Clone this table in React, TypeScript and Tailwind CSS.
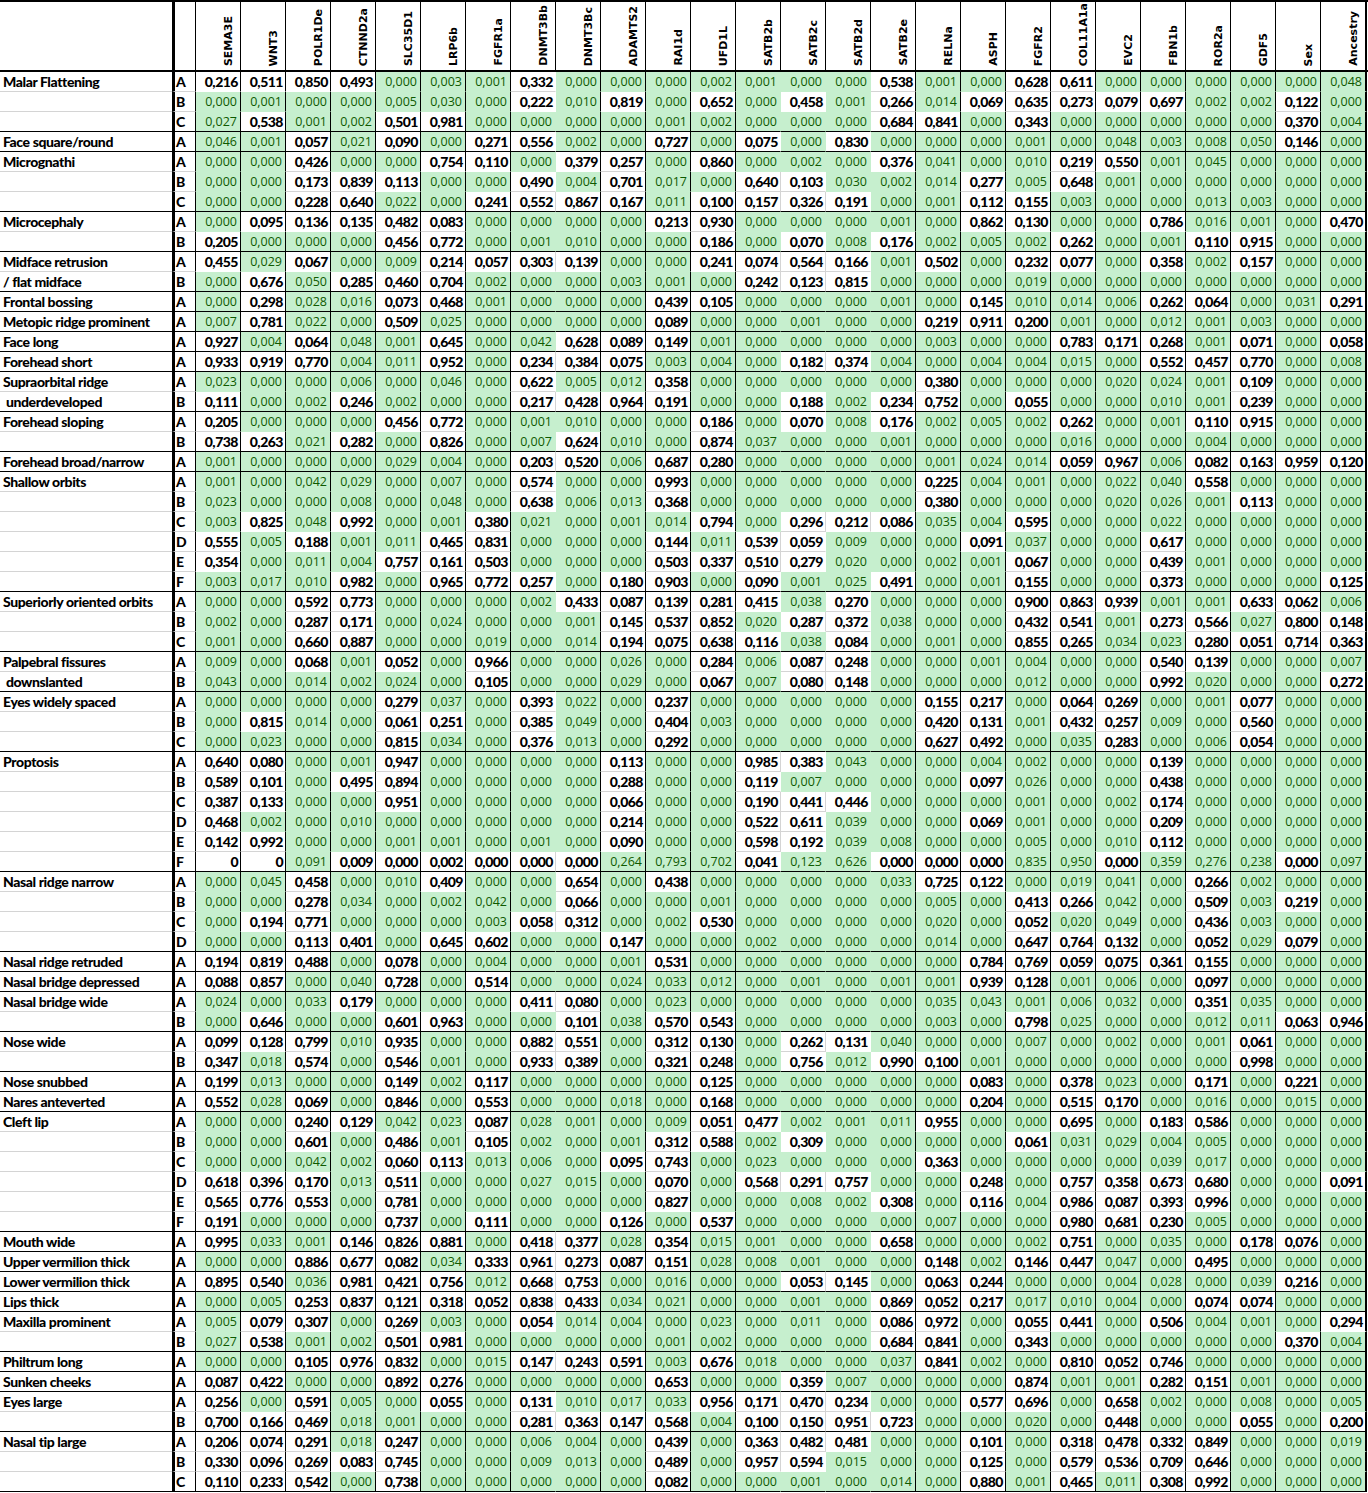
import React from "react";

const GENES = [
  "SEMA3E", "WNT3", "POLR1De", "CTNND2a", "SLC35D1", "LRP6b", "FGFR1a",
  "DNMT3Bb", "DNMT3Bc", "ADAMTS2", "RAI1d", "UFD1L", "SATB2b", "SATB2c",
  "SATB2d", "SATB2e", "RELNa", "ASPH", "FGFR2", "COL11A1a", "EVC2", "FBN1b",
  "ROR2a", "GDF5", "Sex", "Ancestry",
];

// columns of one gene with several SNPs: no black rule on their right edge
const OPEN = new Set([7, 12, 13, 14]);

// this row was colour-coded the other way round in the sheet
const INVERTED = new Set([39]);

const GROUPS: [string[], string[]][] = [
  [["Malar Flattening"], [
    "0,216 0,511 0,850 0,493 0,000 0,003 0,001 0,332 0,000 0,000 0,000 0,002 0,001 0,000 0,000 0,538 0,001 0,000 0,628 0,611 0,000 0,000 0,000 0,000 0,000 0,048",
    "0,000 0,001 0,000 0,000 0,005 0,030 0,000 0,222 0,010 0,819 0,000 0,652 0,000 0,458 0,001 0,266 0,014 0,069 0,635 0,273 0,079 0,697 0,002 0,002 0,122 0,000",
    "0,027 0,538 0,001 0,002 0,501 0,981 0,000 0,000 0,000 0,000 0,001 0,002 0,000 0,000 0,000 0,684 0,841 0,000 0,343 0,000 0,000 0,000 0,000 0,000 0,370 0,004",
  ]],
  [["Face square/round"], [
    "0,046 0,001 0,057 0,021 0,090 0,000 0,271 0,556 0,002 0,000 0,727 0,000 0,075 0,000 0,830 0,000 0,000 0,000 0,001 0,000 0,048 0,003 0,008 0,050 0,146 0,000",
  ]],
  [["Micrognathi"], [
    "0,000 0,000 0,426 0,000 0,000 0,754 0,110 0,000 0,379 0,257 0,000 0,860 0,000 0,002 0,000 0,376 0,041 0,000 0,010 0,219 0,550 0,001 0,045 0,000 0,000 0,000",
    "0,000 0,000 0,173 0,839 0,113 0,000 0,000 0,490 0,004 0,701 0,017 0,000 0,640 0,103 0,030 0,002 0,014 0,277 0,005 0,648 0,001 0,000 0,000 0,000 0,000 0,000",
    "0,000 0,000 0,228 0,640 0,022 0,000 0,241 0,552 0,867 0,167 0,011 0,100 0,157 0,326 0,191 0,000 0,001 0,112 0,155 0,003 0,000 0,000 0,013 0,003 0,000 0,000",
  ]],
  [["Microcephaly"], [
    "0,000 0,095 0,136 0,135 0,482 0,083 0,000 0,000 0,000 0,000 0,213 0,930 0,000 0,000 0,000 0,001 0,000 0,862 0,130 0,000 0,000 0,786 0,016 0,001 0,000 0,470",
    "0,205 0,000 0,000 0,000 0,456 0,772 0,000 0,001 0,010 0,000 0,000 0,186 0,000 0,070 0,008 0,176 0,002 0,005 0,002 0,262 0,000 0,001 0,110 0,915 0,000 0,000",
  ]],
  [["Midface retrusion", "/ flat midface"], [
    "0,455 0,029 0,067 0,000 0,009 0,214 0,057 0,303 0,139 0,000 0,000 0,241 0,074 0,564 0,166 0,001 0,502 0,000 0,232 0,077 0,000 0,358 0,002 0,157 0,000 0,000",
    "0,000 0,676 0,050 0,285 0,460 0,704 0,002 0,000 0,000 0,003 0,001 0,000 0,242 0,123 0,815 0,000 0,000 0,000 0,019 0,000 0,000 0,000 0,000 0,000 0,000 0,000",
  ]],
  [["Frontal bossing"], [
    "0,000 0,298 0,028 0,016 0,073 0,468 0,001 0,000 0,000 0,000 0,439 0,105 0,000 0,000 0,000 0,001 0,000 0,145 0,010 0,014 0,006 0,262 0,064 0,000 0,031 0,291",
  ]],
  [["Metopic ridge prominent"], [
    "0,007 0,781 0,022 0,000 0,509 0,025 0,000 0,000 0,000 0,000 0,089 0,000 0,000 0,001 0,000 0,000 0,219 0,911 0,200 0,001 0,000 0,012 0,001 0,003 0,000 0,000",
  ]],
  [["Face long"], [
    "0,927 0,004 0,064 0,048 0,001 0,645 0,000 0,042 0,628 0,089 0,149 0,001 0,000 0,000 0,000 0,000 0,003 0,000 0,000 0,783 0,171 0,268 0,001 0,071 0,000 0,058",
  ]],
  [["Forehead short"], [
    "0,933 0,919 0,770 0,004 0,011 0,952 0,000 0,234 0,384 0,075 0,003 0,004 0,000 0,182 0,374 0,004 0,000 0,004 0,004 0,015 0,000 0,552 0,457 0,770 0,000 0,008",
  ]],
  [["Supraorbital ridge", " underdeveloped"], [
    "0,023 0,000 0,000 0,006 0,000 0,046 0,000 0,622 0,005 0,012 0,358 0,000 0,000 0,000 0,000 0,000 0,380 0,000 0,000 0,000 0,020 0,024 0,001 0,109 0,000 0,000",
    "0,111 0,000 0,002 0,246 0,002 0,000 0,000 0,217 0,428 0,964 0,191 0,000 0,000 0,188 0,002 0,234 0,752 0,000 0,055 0,000 0,000 0,010 0,001 0,239 0,000 0,000",
  ]],
  [["Forehead sloping"], [
    "0,205 0,000 0,000 0,000 0,456 0,772 0,000 0,001 0,010 0,000 0,000 0,186 0,000 0,070 0,008 0,176 0,002 0,005 0,002 0,262 0,000 0,001 0,110 0,915 0,000 0,000",
    "0,738 0,263 0,021 0,282 0,000 0,826 0,000 0,007 0,624 0,010 0,000 0,874 0,037 0,000 0,000 0,001 0,000 0,000 0,000 0,016 0,000 0,000 0,004 0,000 0,000 0,000",
  ]],
  [["Forehead broad/narrow"], [
    "0,001 0,000 0,000 0,000 0,029 0,004 0,000 0,203 0,520 0,006 0,687 0,280 0,000 0,000 0,000 0,000 0,001 0,024 0,014 0,059 0,967 0,006 0,082 0,163 0,959 0,120",
  ]],
  [["Shallow orbits"], [
    "0,001 0,000 0,042 0,029 0,000 0,007 0,000 0,574 0,000 0,000 0,993 0,000 0,000 0,000 0,000 0,000 0,225 0,004 0,001 0,000 0,022 0,040 0,558 0,000 0,000 0,000",
    "0,023 0,000 0,000 0,008 0,000 0,048 0,000 0,638 0,006 0,013 0,368 0,000 0,000 0,000 0,000 0,000 0,380 0,000 0,000 0,000 0,020 0,026 0,001 0,113 0,000 0,000",
    "0,003 0,825 0,048 0,992 0,000 0,001 0,380 0,021 0,000 0,001 0,014 0,794 0,000 0,296 0,212 0,086 0,035 0,004 0,595 0,000 0,000 0,022 0,000 0,000 0,000 0,000",
    "0,555 0,005 0,188 0,001 0,011 0,465 0,831 0,000 0,000 0,000 0,144 0,011 0,539 0,059 0,009 0,000 0,000 0,091 0,037 0,000 0,000 0,617 0,000 0,000 0,000 0,000",
    "0,354 0,000 0,011 0,004 0,757 0,161 0,503 0,000 0,000 0,000 0,503 0,337 0,510 0,279 0,020 0,000 0,002 0,001 0,067 0,000 0,000 0,439 0,001 0,000 0,000 0,000",
    "0,003 0,017 0,010 0,982 0,000 0,965 0,772 0,257 0,000 0,180 0,903 0,000 0,090 0,001 0,025 0,491 0,000 0,001 0,155 0,000 0,000 0,373 0,000 0,000 0,000 0,125",
  ]],
  [["Superiorly oriented orbits"], [
    "0,000 0,000 0,592 0,773 0,000 0,000 0,000 0,002 0,433 0,087 0,139 0,281 0,415 0,038 0,270 0,000 0,000 0,000 0,900 0,863 0,939 0,001 0,001 0,633 0,062 0,006",
    "0,002 0,000 0,287 0,171 0,000 0,024 0,000 0,000 0,001 0,145 0,537 0,852 0,020 0,287 0,372 0,038 0,000 0,000 0,432 0,541 0,001 0,273 0,566 0,027 0,800 0,148",
    "0,001 0,000 0,660 0,887 0,000 0,000 0,019 0,000 0,014 0,194 0,075 0,638 0,116 0,038 0,084 0,000 0,001 0,000 0,855 0,265 0,034 0,023 0,280 0,051 0,714 0,363",
  ]],
  [["Palpebral fissures", " downslanted"], [
    "0,009 0,000 0,068 0,001 0,052 0,000 0,966 0,000 0,000 0,026 0,000 0,284 0,006 0,087 0,248 0,000 0,000 0,001 0,004 0,000 0,000 0,540 0,139 0,000 0,000 0,007",
    "0,043 0,000 0,014 0,002 0,024 0,000 0,105 0,000 0,000 0,029 0,000 0,067 0,007 0,080 0,148 0,000 0,000 0,000 0,012 0,000 0,000 0,992 0,020 0,000 0,000 0,272",
  ]],
  [["Eyes widely spaced"], [
    "0,000 0,000 0,000 0,000 0,279 0,037 0,000 0,393 0,022 0,000 0,237 0,000 0,000 0,000 0,000 0,000 0,155 0,217 0,000 0,064 0,269 0,000 0,001 0,077 0,000 0,000",
    "0,000 0,815 0,014 0,000 0,061 0,251 0,000 0,385 0,049 0,000 0,404 0,003 0,000 0,000 0,000 0,000 0,420 0,131 0,001 0,432 0,257 0,009 0,000 0,560 0,000 0,000",
    "0,000 0,023 0,000 0,000 0,815 0,034 0,000 0,376 0,013 0,000 0,292 0,000 0,000 0,000 0,000 0,000 0,627 0,492 0,000 0,035 0,283 0,000 0,006 0,054 0,000 0,000",
  ]],
  [["Proptosis"], [
    "0,640 0,080 0,000 0,001 0,947 0,000 0,000 0,000 0,000 0,113 0,000 0,000 0,985 0,383 0,043 0,000 0,000 0,004 0,002 0,000 0,000 0,139 0,000 0,000 0,000 0,000",
    "0,589 0,101 0,000 0,495 0,894 0,000 0,000 0,000 0,000 0,288 0,000 0,000 0,119 0,007 0,000 0,000 0,000 0,097 0,026 0,000 0,000 0,438 0,000 0,000 0,000 0,000",
    "0,387 0,133 0,000 0,000 0,951 0,000 0,000 0,000 0,000 0,066 0,000 0,000 0,190 0,441 0,446 0,000 0,000 0,000 0,001 0,000 0,002 0,174 0,000 0,000 0,000 0,000",
    "0,468 0,002 0,000 0,010 0,000 0,000 0,000 0,000 0,000 0,214 0,000 0,000 0,522 0,611 0,039 0,000 0,000 0,069 0,001 0,000 0,000 0,209 0,000 0,000 0,000 0,000",
    "0,142 0,992 0,000 0,000 0,001 0,001 0,000 0,001 0,000 0,090 0,000 0,000 0,598 0,192 0,039 0,008 0,000 0,000 0,005 0,000 0,010 0,112 0,000 0,000 0,000 0,000",
    "0 0 0,091 0,009 0,000 0,002 0,000 0,000 0,000 0,264 0,793 0,702 0,041 0,123 0,626 0,000 0,000 0,000 0,835 0,950 0,000 0,359 0,276 0,238 0,000 0,097",
  ]],
  [["Nasal ridge narrow"], [
    "0,000 0,045 0,458 0,000 0,010 0,409 0,000 0,000 0,654 0,000 0,438 0,000 0,000 0,000 0,000 0,033 0,725 0,122 0,000 0,019 0,041 0,000 0,266 0,002 0,000 0,000",
    "0,000 0,000 0,278 0,034 0,000 0,002 0,042 0,000 0,066 0,000 0,000 0,001 0,000 0,000 0,000 0,000 0,005 0,000 0,413 0,266 0,042 0,000 0,509 0,003 0,219 0,000",
    "0,000 0,194 0,771 0,000 0,000 0,000 0,003 0,058 0,312 0,000 0,002 0,530 0,000 0,000 0,000 0,000 0,020 0,000 0,052 0,020 0,049 0,000 0,436 0,003 0,000 0,000",
    "0,000 0,000 0,113 0,401 0,000 0,645 0,602 0,000 0,000 0,147 0,000 0,000 0,002 0,000 0,000 0,000 0,014 0,000 0,647 0,764 0,132 0,000 0,052 0,029 0,079 0,000",
  ]],
  [["Nasal ridge retruded"], [
    "0,194 0,819 0,488 0,000 0,078 0,000 0,004 0,000 0,000 0,001 0,531 0,000 0,000 0,000 0,000 0,000 0,000 0,784 0,769 0,059 0,075 0,361 0,155 0,000 0,000 0,000",
  ]],
  [["Nasal bridge depressed"], [
    "0,088 0,857 0,000 0,040 0,728 0,000 0,514 0,000 0,000 0,024 0,033 0,012 0,000 0,001 0,000 0,001 0,001 0,939 0,128 0,001 0,006 0,000 0,097 0,000 0,000 0,000",
  ]],
  [["Nasal bridge wide"], [
    "0,024 0,000 0,033 0,179 0,000 0,000 0,000 0,411 0,080 0,000 0,023 0,000 0,000 0,000 0,000 0,000 0,035 0,043 0,001 0,006 0,032 0,000 0,351 0,035 0,000 0,000",
    "0,000 0,646 0,000 0,000 0,601 0,963 0,000 0,000 0,101 0,038 0,570 0,543 0,000 0,000 0,000 0,000 0,003 0,000 0,798 0,025 0,000 0,000 0,012 0,011 0,063 0,946",
  ]],
  [["Nose wide"], [
    "0,099 0,128 0,799 0,010 0,935 0,000 0,000 0,882 0,551 0,000 0,312 0,130 0,000 0,262 0,131 0,040 0,000 0,000 0,007 0,000 0,002 0,000 0,001 0,061 0,000 0,000",
    "0,347 0,018 0,574 0,000 0,546 0,001 0,000 0,933 0,389 0,000 0,321 0,248 0,000 0,756 0,012 0,990 0,100 0,001 0,000 0,000 0,000 0,000 0,000 0,998 0,000 0,000",
  ]],
  [["Nose snubbed"], [
    "0,199 0,013 0,000 0,000 0,149 0,002 0,117 0,000 0,000 0,000 0,000 0,125 0,000 0,000 0,000 0,000 0,000 0,083 0,000 0,378 0,023 0,000 0,171 0,000 0,221 0,000",
  ]],
  [["Nares anteverted"], [
    "0,552 0,028 0,069 0,000 0,846 0,000 0,553 0,000 0,000 0,018 0,000 0,168 0,000 0,000 0,000 0,000 0,000 0,204 0,000 0,515 0,170 0,000 0,016 0,000 0,015 0,000",
  ]],
  [["Cleft lip"], [
    "0,000 0,000 0,240 0,129 0,042 0,023 0,087 0,028 0,001 0,000 0,009 0,051 0,477 0,002 0,001 0,011 0,955 0,000 0,000 0,695 0,000 0,183 0,586 0,000 0,000 0,000",
    "0,000 0,000 0,601 0,000 0,486 0,001 0,105 0,002 0,000 0,001 0,312 0,588 0,002 0,309 0,000 0,000 0,000 0,000 0,061 0,031 0,029 0,004 0,005 0,000 0,000 0,000",
    "0,000 0,000 0,042 0,002 0,060 0,113 0,013 0,006 0,000 0,095 0,743 0,000 0,023 0,000 0,000 0,000 0,363 0,000 0,000 0,000 0,000 0,039 0,017 0,000 0,000 0,000",
    "0,618 0,396 0,170 0,013 0,511 0,000 0,000 0,027 0,015 0,000 0,070 0,000 0,568 0,291 0,757 0,000 0,000 0,248 0,000 0,757 0,358 0,673 0,680 0,000 0,000 0,091",
    "0,565 0,776 0,553 0,000 0,781 0,000 0,000 0,000 0,000 0,000 0,827 0,000 0,000 0,008 0,002 0,308 0,000 0,116 0,004 0,986 0,087 0,393 0,996 0,000 0,000 0,000",
    "0,191 0,000 0,000 0,000 0,737 0,000 0,111 0,000 0,000 0,126 0,000 0,537 0,000 0,000 0,000 0,000 0,007 0,000 0,000 0,980 0,681 0,230 0,005 0,000 0,000 0,000",
  ]],
  [["Mouth wide"], [
    "0,995 0,033 0,001 0,146 0,826 0,881 0,000 0,418 0,377 0,028 0,354 0,015 0,001 0,000 0,000 0,658 0,000 0,000 0,002 0,751 0,000 0,035 0,000 0,178 0,076 0,000",
  ]],
  [["Upper vermilion thick"], [
    "0,000 0,000 0,886 0,677 0,082 0,034 0,333 0,961 0,273 0,087 0,151 0,028 0,008 0,001 0,000 0,000 0,148 0,002 0,146 0,447 0,047 0,000 0,495 0,000 0,000 0,000",
  ]],
  [["Lower vermilion thick"], [
    "0,895 0,540 0,036 0,981 0,421 0,756 0,012 0,668 0,753 0,000 0,016 0,000 0,000 0,053 0,145 0,000 0,063 0,244 0,000 0,000 0,004 0,028 0,000 0,039 0,216 0,000",
  ]],
  [["Lips thick"], [
    "0,000 0,005 0,253 0,837 0,121 0,318 0,052 0,838 0,433 0,034 0,021 0,000 0,000 0,001 0,000 0,869 0,052 0,217 0,017 0,010 0,004 0,000 0,074 0,074 0,000 0,000",
  ]],
  [["Maxilla prominent"], [
    "0,005 0,079 0,307 0,000 0,269 0,003 0,000 0,054 0,014 0,004 0,000 0,023 0,000 0,011 0,000 0,086 0,972 0,000 0,055 0,441 0,000 0,506 0,004 0,001 0,000 0,294",
    "0,027 0,538 0,001 0,002 0,501 0,981 0,000 0,000 0,000 0,000 0,001 0,002 0,000 0,000 0,000 0,684 0,841 0,000 0,343 0,000 0,000 0,000 0,000 0,000 0,370 0,004",
  ]],
  [["Philtrum long"], [
    "0,000 0,000 0,105 0,976 0,832 0,000 0,015 0,147 0,243 0,591 0,003 0,676 0,018 0,000 0,000 0,037 0,841 0,002 0,000 0,810 0,052 0,746 0,000 0,000 0,000 0,000",
  ]],
  [["Sunken cheeks"], [
    "0,087 0,422 0,000 0,000 0,892 0,276 0,000 0,000 0,000 0,000 0,653 0,000 0,000 0,359 0,007 0,000 0,000 0,000 0,874 0,001 0,001 0,282 0,151 0,001 0,000 0,000",
  ]],
  [["Eyes large"], [
    "0,256 0,000 0,591 0,005 0,000 0,055 0,000 0,131 0,010 0,017 0,033 0,956 0,171 0,470 0,234 0,000 0,000 0,577 0,696 0,000 0,658 0,002 0,000 0,008 0,000 0,005",
    "0,700 0,166 0,469 0,018 0,001 0,000 0,000 0,281 0,363 0,147 0,568 0,004 0,100 0,150 0,951 0,723 0,000 0,000 0,020 0,000 0,448 0,000 0,000 0,055 0,000 0,200",
  ]],
  [["Nasal tip large"], [
    "0,206 0,074 0,291 0,018 0,247 0,000 0,000 0,006 0,004 0,000 0,439 0,000 0,363 0,482 0,481 0,000 0,000 0,101 0,000 0,318 0,478 0,332 0,849 0,000 0,000 0,019",
    "0,330 0,096 0,269 0,083 0,745 0,000 0,000 0,009 0,013 0,000 0,489 0,000 0,957 0,594 0,015 0,000 0,000 0,125 0,000 0,579 0,536 0,709 0,646 0,000 0,000 0,000",
    "0,110 0,233 0,542 0,000 0,738 0,000 0,000 0,000 0,000 0,000 0,082 0,000 0,000 0,001 0,000 0,014 0,000 0,880 0,001 0,465 0,011 0,308 0,992 0,000 0,000 0,000",
  ]],
];

interface Row {
  label: string;
  letter: string;
  vals: string[];
  end: boolean;
}

const ROWS: Row[] = GROUPS.flatMap(([labels, lines]) =>
  lines.map((line, i) => ({
    label: labels[i] ?? "",
    letter: "ABCDEF"[i],
    vals: line.split(" "),
    end: i === lines.length - 1,
  }))
);

const isGreen = (r: number, c: number) => {
  const v = parseFloat(ROWS[r].vals[c].replace(",", "."));
  return INVERTED.has(r) ? v > 0.05 : v <= 0.05;
};

const BOTTOM = {
  black: "border-b-black",
  gray: "border-b-[#d4d4d4]",
  green: "border-b-[#c6efce]",
  white: "border-b-white",
};

const RIGHT = {
  black: "border-r-black",
  gray: "border-r-[#d4d4d4]",
  green: "border-r-[#c6efce]",
  white: "border-r-white",
};

const Cell: React.FC<{ r: number; c: number }> = ({ r, c }) => {
  const row = ROWS[r];
  const green = isGreen(r, c);
  const own = green ? "green" : "white";
  const last = c === GENES.length - 1;

  let bottom: keyof typeof BOTTOM = own;
  if (row.end) bottom = "black";
  else if (!green && !isGreen(r + 1, c)) bottom = "gray";

  let right: keyof typeof RIGHT = "black";
  if (OPEN.has(c)) right = !green && !isGreen(r, c + 1) ? "gray" : own;

  return (
    <div
      className={`flex shrink-0 items-center justify-end border-b leading-[19px] ${
        last ? "w-[46px] border-r-2" : "w-[45px] border-r"
      } ${BOTTOM[bottom]} ${RIGHT[right]} ${
        green
          ? "bg-[#c6efce] pr-[3px] font-['Open_Sans',sans-serif] text-[12.5px] text-[#0f5a00]"
          : "bg-white pr-[2px] font-['Lato',sans-serif] text-[14px] font-black tracking-[-0.5px] text-black"
      }`}
    >
      {row.vals[c]}
    </div>
  );
};

export default function App() {
  return (
    <div className="min-h-[1493px] w-[1368px] bg-white text-black">
      <div className="flex h-[72px] border-t-2 border-b-2 border-black">
        <div className="w-[172px] shrink-0" />
        <div className="w-[24px] shrink-0 border-l-[3px] border-r border-black" />
        {GENES.map((g, i) => (
          <div
            key={g}
            className={`flex shrink-0 items-end justify-end border-black pb-[4px] pr-[5px] ${
              i === GENES.length - 1 ? "w-[46px] border-r-2" : "w-[45px] border-r"
            }`}
          >
            <span className="rotate-180 font-['DejaVu_Sans',sans-serif] text-[11px] font-bold leading-[12px] [writing-mode:vertical-rl]">
              {g}
            </span>
          </div>
        ))}
      </div>

      {ROWS.map((row, r) => (
        <div key={r} className="flex h-[20px]">
          <div
            className={`w-[172px] shrink-0 whitespace-pre border-b pl-[3px] font-['Lato',sans-serif] text-[14px] font-black leading-[19px] tracking-[-0.4px] ${
              row.end ? "border-b-black" : "border-b-[#d4d4d4]"
            }`}
          >
            {row.label}
          </div>
          <div
            className={`w-[24px] shrink-0 border-b border-l-[3px] border-r border-l-black border-r-black pl-[1px] font-['Lato',sans-serif] text-[14px] font-black leading-[19px] ${
              row.end ? "border-b-black" : "border-b-[#d4d4d4]"
            }`}
          >
            {row.letter}
          </div>
          {GENES.map((g, c) => (
            <Cell key={g} r={r} c={c} />
          ))}
        </div>
      ))}
    </div>
  );
}
